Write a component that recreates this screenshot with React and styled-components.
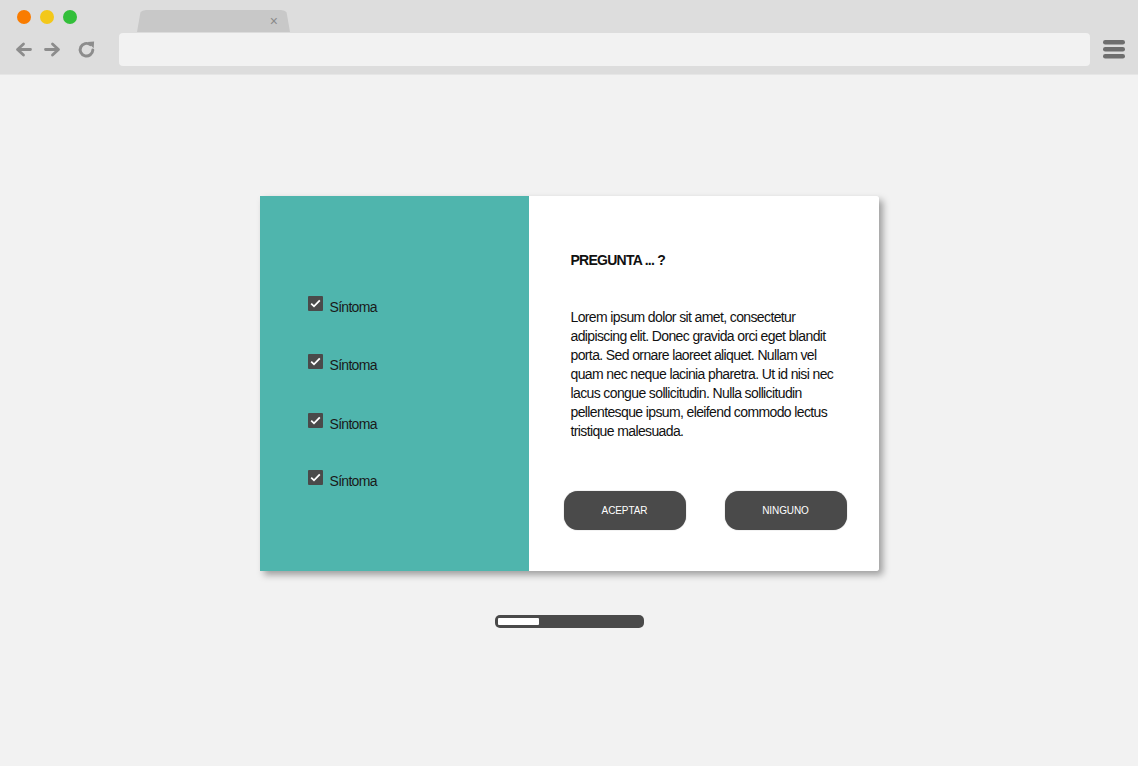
import React from "react";
import styled, { createGlobalStyle } from "styled-components";

const Global = createGlobalStyle`
  html, body {
    margin: 0;
    padding: 0;
    background: #f2f2f2;
    font-family: "Liberation Sans", Arial, sans-serif;
  }
`;

const Page = styled.div`
  width: 100%;
  min-height: 766px;
  display: flex;
  flex-direction: column;
  background: #f2f2f2;
`;

const Chrome = styled.div`
  height: 75px;
  background: #dddddd;
  border-bottom: 1px solid #e6e6e6;
  display: flex;
  flex-direction: column;
  box-sizing: border-box;
`;

const TopRow = styled.div`
  height: 32px;
  display: flex;
  align-items: flex-end;
  position: relative;
`;

const Lights = styled.div`
  display: flex;
  gap: 9px;
  position: absolute;
  left: 17px;
  top: 10px;
`;

const Light = styled.span`
  width: 14px;
  height: 14px;
  border-radius: 50%;
  background: ${(p) => p.$c};
`;

const Tab = styled.div`
  margin-left: 137px;
  width: 153px;
  height: 22px;
  background: #c8c8c8;
  border-radius: 9px 9px 0 0;
  clip-path: polygon(2.5% 0, 97.5% 0, 100% 100%, 0 100%);
  display: flex;
  justify-content: flex-end;
  align-items: center;
  padding-right: 12px;
  box-sizing: border-box;
  color: #8a8a8a;
  font-size: 14px;
`;

const NavRow = styled.div`
  height: 34px;
  display: flex;
  align-items: center;
`;

const NavIcons = styled.div`
  width: 119px;
  display: flex;
  align-items: center;
  gap: 12px;
  padding-left: 15px;
  box-sizing: border-box;
`;

const ReloadWrap = styled.span`
  display: flex;
  margin-left: 4px;
`;

const Address = styled.div`
  flex: 1;
  height: 33px;
  background: #f2f2f2;
  border-radius: 4px;
`;

const Menu = styled.div`
  width: 48px;
  display: flex;
  justify-content: center;
`;

const Main = styled.div`
  flex: 1;
  display: flex;
  flex-direction: column;
  align-items: center;
  padding-top: 121px;
`;

const Card = styled.div`
  width: 619px;
  height: 375px;
  display: flex;
  border-radius: 0 3px 3px 0;
  box-shadow: 4px 4px 7px rgba(0, 0, 0, 0.35);
`;

const Symptoms = styled.div`
  width: 269px;
  background: #4fb5ad;
  display: flex;
  flex-direction: column;
  padding: 100px 0 0 48px;
  box-sizing: border-box;
`;

const Symptom = styled.label`
  display: flex;
  align-items: flex-start;
  gap: 7px;
  height: ${(p) => p.$h}px;
  font-size: 14px;
  letter-spacing: -0.7px;
  color: #1a1a1a;
`;

const Box = styled.span`
  width: 15px;
  height: 15px;
  background: #4a4a4a;
  border-radius: 1px;
  display: flex;
  align-items: center;
  justify-content: center;
`;

const SymptomText = styled.span`
  margin-top: 3px;
`;

const Question = styled.div`
  flex: 1;
  background: #ffffff;
  border-radius: 0 3px 3px 0;
  display: flex;
  flex-direction: column;
  padding: 56px 32px 0 35px;
  box-sizing: border-box;
`;

const Title = styled.h2`
  margin: 0 0 0 7px;
  font-size: 14px;
  font-weight: bold;
  letter-spacing: -0.75px;
  color: #111;
  line-height: 16px;
`;

const Body = styled.p`
  margin: 40px 0 0 7px;
  font-size: 14px;
  line-height: 19px;
  letter-spacing: -0.62px;
  color: #111;
  width: 268px;
`;

const Buttons = styled.div`
  display: flex;
  justify-content: space-between;
  margin-top: 50px;
`;

const Button = styled.button`
  width: 122px;
  height: 39px;
  border: none;
  border-radius: 14px;
  background: #4a4a4a;
  color: #fff;
  font-family: "Liberation Sans", Arial, sans-serif;
  font-size: 10px;
  letter-spacing: -0.1px;
  box-shadow: 0 0 1px rgba(0, 0, 0, 0.5);
  cursor: pointer;
`;

const Progress = styled.div`
  margin-top: 44px;
  width: 149px;
  height: 13px;
  background: #4a4a4a;
  border-radius: 5px;
  padding: 3px;
  box-sizing: border-box;
  display: flex;
`;

const Fill = styled.div`
  height: 100%;
  background: #ffffff;
  border-radius: 1px;
`;

const Check = () => (
  <svg width="11" height="9" viewBox="0 0 11 9">
    <path d="M1.2 4.6 L4 7.3 L9.8 1.4" fill="none" stroke="#fff" strokeWidth="1.8" />
  </svg>
);

const Arrow = ({ dir }) => (
  <svg width="17" height="15" viewBox="0 0 17 15" style={{ transform: dir === "r" ? "scaleX(-1)" : "none" }}>
    <path d="M15.5 7.5 H3 M8.5 2 L2.5 7.5 L8.5 13" fill="none" stroke="#8c8c8c" strokeWidth="2.8" strokeLinecap="round" strokeLinejoin="round" />
  </svg>
);

const Reload = () => (
  <svg width="19" height="19" viewBox="0 0 18 18">
    <path d="M15 9.5 A6 6 0 1 1 12.6 4.4" fill="none" stroke="#8c8c8c" strokeWidth="2.8" strokeLinecap="round" />
    <path d="M10 1.8 L16.2 1.5 L15.8 7.7 Z" fill="#8c8c8c" />
  </svg>
);

const Burger = () => (
  <svg width="22" height="19" viewBox="0 0 22 19">
    <rect x="0" y="0" width="22" height="4.5" rx="2.2" fill="#6e6e6e" />
    <rect x="0" y="7" width="22" height="4.5" rx="2.2" fill="#6e6e6e" />
    <rect x="0" y="14" width="22" height="4.5" rx="2.2" fill="#6e6e6e" />
  </svg>
);

const symptoms = [
  { label: "Síntoma", h: 58 },
  { label: "Síntoma", h: 59 },
  { label: "Síntoma", h: 57 },
  { label: "Síntoma", h: 30 },
];

export default function App() {
  return (
    <>
      <Global />
      <Page>
        <Chrome>
          <TopRow>
            <Lights>
              <Light $c="#f97c00" />
              <Light $c="#f3c81a" />
              <Light $c="#33bf3a" />
            </Lights>
            <Tab>×</Tab>
          </TopRow>
          <NavRow>
            <NavIcons>
              <Arrow dir="l" />
              <Arrow dir="r" />
              <ReloadWrap>
                <Reload />
              </ReloadWrap>
            </NavIcons>
            <Address />
            <Menu>
              <Burger />
            </Menu>
          </NavRow>
        </Chrome>
        <Main>
          <Card>
            <Symptoms>
              {symptoms.map((s, i) => (
                <Symptom key={i} $h={s.h}>
                  <Box>
                    <Check />
                  </Box>
                  <SymptomText>{s.label}</SymptomText>
                </Symptom>
              ))}
            </Symptoms>
            <Question>
              <Title>PREGUNTA ... ?</Title>
              <Body>
                Lorem ipsum dolor sit amet, consectetur adipiscing elit. Donec gravida orci eget
                blandit porta. Sed ornare laoreet aliquet. Nullam vel quam nec neque lacinia
                pharetra. Ut id nisi nec lacus congue sollicitudin. Nulla sollicitudin pellentesque
                ipsum, eleifend commodo lectus tristique malesuada.
              </Body>
              <Buttons>
                <Button>ACEPTAR</Button>
                <Button>NINGUNO</Button>
              </Buttons>
            </Question>
          </Card>
          <Progress>
            <Fill style={{ width: `${(41 / 143) * 100}%` }} />
          </Progress>
        </Main>
      </Page>
    </>
  );
}
